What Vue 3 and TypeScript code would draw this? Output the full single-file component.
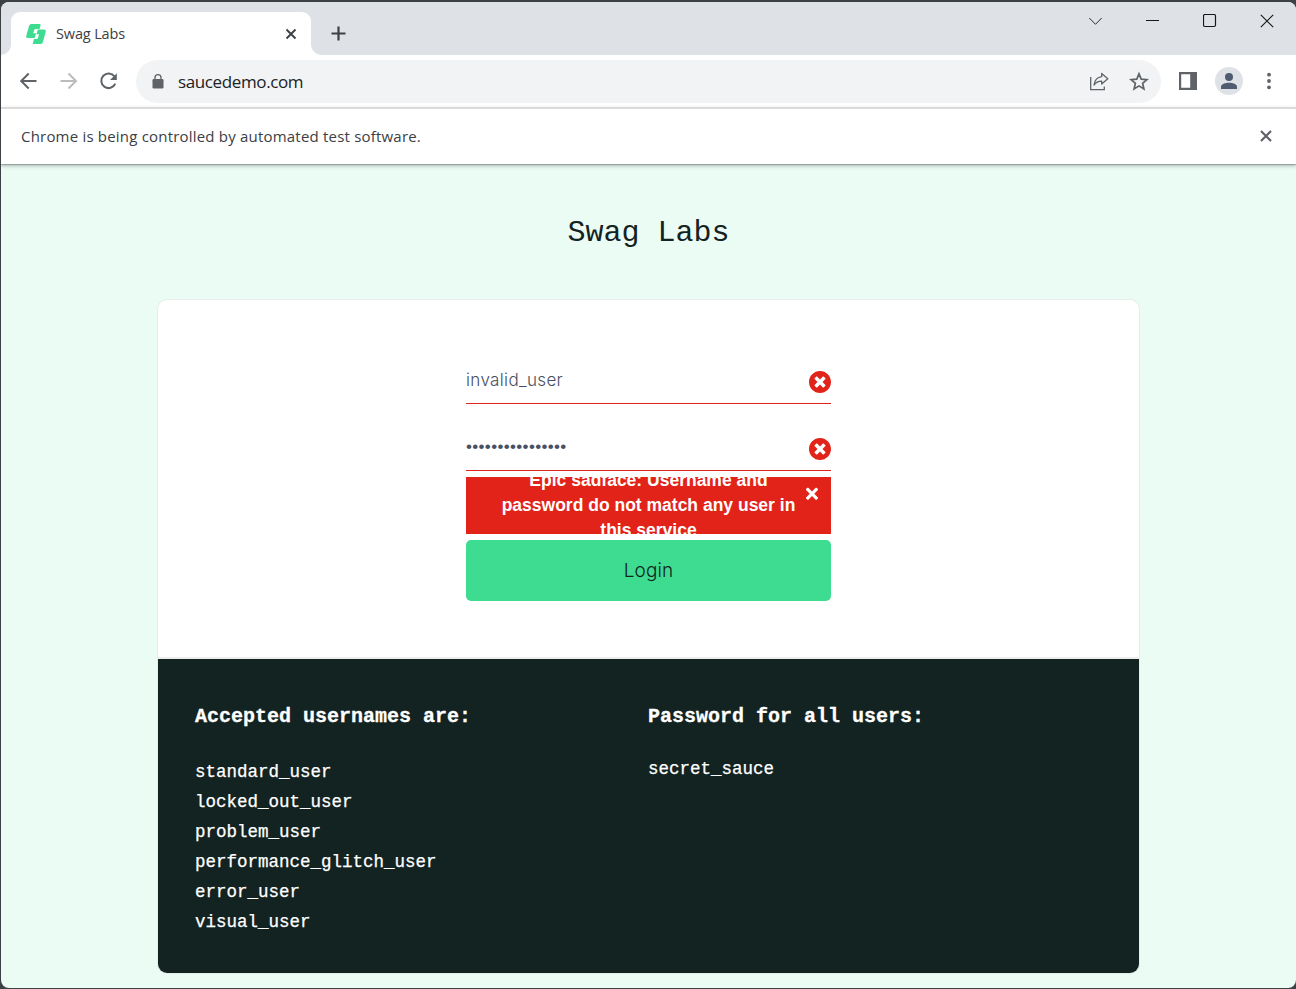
<script setup lang="ts">
import { ref } from 'vue'

const username = ref('invalid_user')
const password = ref('invalid_password')
const users: string[] = ['standard_user', 'locked_out_user', 'problem_user', 'performance_glitch_user', 'error_user', 'visual_user']
</script>

<template>
  <div class="desktop">
    <div class="window">
      <header class="tabstrip">
        <div class="tab">
          <svg class="logo" width="22" height="22" viewBox="0 0 22 22">
            <path fill="#3ddc91" d="M6.500 1H14.500q1.500 0 1.100 1.300L14.500 6H11Q9.500 6 9.100 7.200L8.200 10.300H11L9.700 15H3Q.7 15 1.300 12.800L4 3Q4.600 1 6.500 1Z" />
            <path fill="#3ddc91" d="M12.800 6.500H18.800Q21.300 6.500 20.700 8.700L18 18.800Q17.400 21 15.500 21H7.700L9 16H11.500Q12.700 16 13.100 14.800L14 11.300H11.400Z" />
          </svg>
          <span class="tab-title">Swag Labs</span>
          <svg class="tab-close" width="12" height="12" viewBox="0 0 12 12"><path d="M1.500 1.500l9 9m0-9l-9 9" stroke="#3c4043" stroke-width="1.900" /></svg>
        </div>
        <svg class="plus" width="16" height="16" viewBox="0 0 16 16"><path d="M7.500 .5v14M.5 7.500h14" stroke="#3c4043" stroke-width="2.200" /></svg>
        <div class="controls">
          <svg width="14" height="14" viewBox="0 0 14 14"><path d="M1.300 4L7.500 10.300l6.200-6.300" stroke-width=".9" /></svg>
          <svg width="14" height="14" viewBox="0 0 14 14"><path d="M1 6.500h13" stroke-width="1" /></svg>
          <svg width="14" height="14" viewBox="0 0 14 14"><rect x=".5" y=".5" width="12" height="12" rx="1.500" stroke-width="1.200" /></svg>
          <svg width="14" height="14" viewBox="0 0 14 14"><path d="M.8.8l12.400 12.400M13.200.8L.8 13.200" stroke-width="1.100" /></svg>
        </div>
      </header>

      <div class="toolbar">
        <svg class="nav" width="20" height="20" viewBox="0 0 20 20"><path d="M18.500 10H3.500M10.700 2.500L3.200 10l7.500 7.500" /></svg>
        <svg class="nav faded" width="20" height="20" viewBox="0 0 20 20"><path d="M2.500 10h15M10.500 2.500L18 10l-7.500 7.500" /></svg>
        <svg class="nav" width="20" height="20" viewBox="0 0 20 20">
          <path d="M16.500 5.500A7.300 7.300 0 1 0 17.300 12.700" />
          <path d="M18.800 2.200v6.800h-6.800z" fill="#5f6368" stroke="none" />
        </svg>
        <div class="omnibox">
          <svg class="lock" width="12" height="16" viewBox="0 0 12 16">
            <rect x=".5" y="6" width="11" height="9.500" rx="1.300" fill="#5f6368" />
            <path d="M3 6.500V4.700a3 3 0 0 1 6 0V6.500" fill="none" stroke="#5f6368" stroke-width="1.300" />
          </svg>
          <span class="url">saucedemo.com</span>
          <svg class="share" width="20" height="20" viewBox="0 0 20 20" fill="none" stroke="#5f6368" stroke-width="1.300">
            <path d="M1.700 6v12.600H15.300V15.500" />
            <path d="M12.700 2.500l6.100 5.300-6.100 5.300V10.200C9 10.200 7 11.200 5 14 5.600 9.400 8 6.300 12.700 5.700z" stroke-linejoin="round" />
          </svg>
          <svg class="star" width="20" height="20" viewBox="0 0 20 20"><path d="M10 2.800l2.200 5.300 5.700.5-4.300 3.700 1.300 5.600L10 14.900l-4.900 3 1.300-5.600-4.300-3.700 5.700-.5z" fill="none" stroke="#5f6368" stroke-width="1.700" /></svg>
        </div>
        <svg class="panel" width="18" height="18" viewBox="0 0 18 18"><path fill="#5f6368" fill-rule="evenodd" d="M0 0h18v18H0zM2.200 2.200v13.600h9V2.200z" /></svg>
        <div class="avatar">
          <svg width="16" height="16" viewBox="0 0 16 16" fill="#4f5b70"><circle cx="8" cy="4" r="4" /><path d="M0 16v-2.300C0 11 4.500 9.800 8 9.800s8 1.200 8 3.900V16z" /></svg>
        </div>
        <svg class="dots" width="4" height="18" viewBox="0 0 4 18" fill="#5f6368"><circle cx="2" cy="2.700" r="1.900" /><circle cx="2" cy="9" r="1.900" /><circle cx="2" cy="15.300" r="1.900" /></svg>
      </div>

      <div class="infobar">
        <span>Chrome is being controlled by automated test software.</span>
        <svg width="12" height="12" viewBox="0 0 12 12"><path d="M1 1l10 10M11 1L1 11" stroke="#5f6368" stroke-width="2.200" /></svg>
      </div>

      <main class="page">
        <h1>Swag Labs</h1>
        <section class="card">
          <form class="login" @submit.prevent>
            <div class="field">
              <input v-model="username" type="text" autocomplete="off" spellcheck="false" />
              <svg width="22" height="22" viewBox="8 8 496 496"><path fill="#e2231a" d="M256 8C119 8 8 119 8 256s111 248 248 248 248-111 248-248S393 8 256 8zm121.600 313.100c4.700 4.700 4.700 12.300 0 17L338 377.600c-4.700 4.700-12.300 4.700-17 0L256 312l-65.100 65.600c-4.700 4.700-12.300 4.700-17 0L134.400 338c-4.700-4.700-4.700-12.300 0-17l65.600-65-65.600-65.100c-4.700-4.700-4.700-12.300 0-17l39.600-39.600c4.700-4.700 12.300-4.700 17 0l65 65.700 65.100-65.600c4.700-4.700 12.300-4.700 17 0l39.600 39.600c4.700 4.700 4.700 12.300 0 17L312 256l65.600 65.100z" /></svg>
            </div>
            <div class="field">
              <input v-model="password" class="secret" type="password" autocomplete="off" />
              <svg width="22" height="22" viewBox="8 8 496 496"><path fill="#e2231a" d="M256 8C119 8 8 119 8 256s111 248 248 248 248-111 248-248S393 8 256 8zm121.600 313.100c4.700 4.700 4.700 12.300 0 17L338 377.600c-4.700 4.700-12.300 4.700-17 0L256 312l-65.100 65.600c-4.700 4.700-12.300 4.700-17 0L134.400 338c-4.700-4.700-4.700-12.300 0-17l65.600-65-65.600-65.100c-4.700-4.700-4.700-12.300 0-17l39.600-39.600c4.700-4.700 12.300-4.700 17 0l65 65.700 65.100-65.600c4.700-4.700 12.300-4.700 17 0l39.600 39.600c4.700 4.700 4.700 12.300 0 17L312 256l65.600 65.100z" /></svg>
            </div>
            <div class="error">
              <h3>Epic sadface: Username and<br />password do not match any user in<br />this service</h3>
              <svg width="12" height="17.500" viewBox="0 0 352 512"><path fill="#fff" d="M242.720 256l100.070-100.070c12.280-12.280 12.280-32.190 0-44.480l-22.240-22.240c-12.280-12.280-32.190-12.280-44.480 0L176 189.280 75.930 89.210c-12.280-12.280-32.190-12.280-44.480 0L9.210 111.450c-12.280 12.280-12.280 32.190 0 44.480L109.280 256 9.210 356.070c-12.280 12.280-12.280 32.190 0 44.480l22.240 22.240c12.280 12.280 32.200 12.280 44.480 0L176 322.720l100.070 100.070c12.280 12.280 32.200 12.280 44.480 0l22.240-22.240c12.280-12.280 12.280-32.190 0-44.480L242.720 256z" /></svg>
            </div>
            <button type="submit">Login</button>
          </form>
          <div class="credentials">
            <div class="col">
              <h4>Accepted usernames are:</h4>
              <ul><li v-for="user in users" :key="user">{{ user }}</li></ul>
            </div>
            <div class="col">
              <h4>Password for all users:</h4>
              <p>secret_sauce</p>
            </div>
          </div>
        </section>
      </main>
    </div>
  </div>
</template>

<style>
html, body { margin: 0; overflow: hidden; }
</style>

<style scoped>
* { box-sizing: border-box; }
svg { display: block; flex: none; }
.desktop { width: 1296px; height: 989px; padding: 2px 0 1px 1px; background: #3b4145; overflow: hidden; }
.window { height: 986px; display: flex; flex-direction: column; overflow: hidden; border-radius: 8px; background: #ebfcf5; font-family: "Open Sans", "Noto Sans", sans-serif; }
.tabstrip { height: 53px; flex: none; background: #dee1e6; display: flex; align-items: flex-start; padding-left: 10px; }
.tab { position: relative; width: 300px; height: 43px; margin-top: 10px; background: #fff; border-radius: 9px 9px 0 0; display: flex; align-items: center; padding: 0 14px; }
.tab::before, .tab::after { content: ""; position: absolute; bottom: 0; width: 10px; height: 10px; }
.tab::before { left: -10px; background: radial-gradient(circle at 0 0, transparent 9.500px, #fff 10px); }
.tab::after { right: -10px; background: radial-gradient(circle at 100% 0, transparent 9.500px, #fff 10px); }
.tab-title { margin-left: 9px; flex: 1; font-size: 14.500px; letter-spacing: -.15px; color: #3c4043; }
.plus { margin: 24px 0 0 20px; }
.controls { margin: 12px 22px 0 auto; display: flex; gap: 43.300px; }
.controls svg { fill: none; stroke: #161616; stroke-width: 1.100; }
.toolbar { height: 52px; flex: none; background: #fff; display: flex; align-items: center; padding-left: 17px; }
.nav { margin-right: 20px; fill: none; stroke: #5f6368; stroke-width: 2; }
.nav.faded { stroke: #babcbe; }
.omnibox { width: 1025px; height: 43px; margin-left: -2px; border-radius: 22px; background: #f1f3f4; display: flex; align-items: center; padding: 0 12px 0 16px; }
.url { flex: 1; margin-left: 14px; font-size: 17px; letter-spacing: -.38px; color: #202124; }
.star { margin-left: 20px; }
.panel { margin-left: 18px; }
.avatar { width: 28px; height: 28px; margin-left: 18px; border-radius: 50%; background: #dee1e6; display: grid; place-items: center; }
.dots { margin-left: 23.500px; }
.infobar { position: relative; height: 57px; flex: none; border-top: 2px solid #dadada; background: #fff; display: flex; align-items: center; justify-content: space-between; padding: 0 24px 1px 20px; font-size: 15px; letter-spacing: .2px; color: #3c4043; box-shadow: 0 1px 1px rgba(0, 0, 0, .2), 0 2px 4px rgba(0, 0, 0, .25); }
.page { flex: 1; display: flex; flex-direction: column; align-items: center; padding-right: 0; }
h1 { margin: 47px 0 0; height: 45px; font: 400 30px/45px "Liberation Mono", monospace; color: #132322; }
.card { width: 981px; height: 673px; margin-top: 44px; border-radius: 9px; overflow: hidden; background: #fff; box-shadow: 0 0 0 1px #e5eeea; }
.login { width: 365px; height: 357px; margin: 0 auto; padding-top: 56px; }
.field { height: 48px; margin-bottom: 19px; border-bottom: 1px solid #e2231a; display: flex; align-items: center; }
.field svg { margin-top: 5px; }
input { width: 343px; height: 40px; border: 0; outline: 0; padding: 0; background: transparent; color: #485063; font: 300 17px "Inter", sans-serif; letter-spacing: .35px; }
input.secret { padding-top: 1px; font-family: "Liberation Sans", sans-serif; letter-spacing: .34px; }
.error { position: relative; height: 57px; margin-top: -13px; background: #e2231a; overflow: hidden; display: flex; align-items: center; justify-content: center; }
.error h3 { margin: 0; font: 700 17.500px/25px "Liberation Sans", sans-serif; color: #fff; text-align: center; white-space: nowrap; }
.error svg { position: absolute; right: 13px; top: 7.500px; }
button { display: block; width: 365px; height: 61px; margin-top: 6px; border: 0; border-radius: 5px; background: #3ddc91; color: #132322; font: 300 19px "Inter", sans-serif; letter-spacing: .1px; }
.credentials { height: 316px; border-top: 2px solid #ededed; background: #132322; color: #fff; display: flex; padding-left: 37px; font-family: "Liberation Mono", monospace; }
.col { width: 453px; }
h4 { margin: 43px 0 0; font-size: 20px; line-height: 30px; -webkit-text-stroke: .3px #fff; }
ul { margin: 25px 0 0; padding: 0; list-style: none; }
li, p { font-size: 17.500px; line-height: 30px; -webkit-text-stroke: .25px #fff; }
p { margin: 22px 0 0; }
</style>
